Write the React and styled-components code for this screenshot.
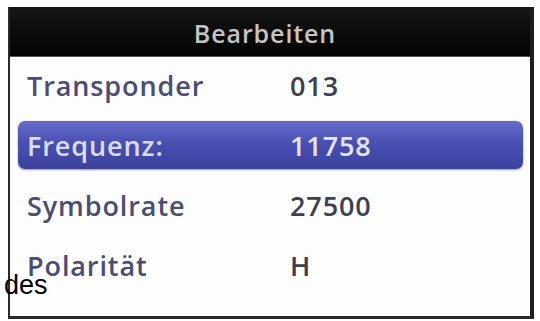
import React from "react";
import styled, { createGlobalStyle } from "styled-components";

const GlobalStyle = createGlobalStyle`
  html, body {
    margin: 0;
    padding: 0;
    background: #ffffff;
  }
`;

const Page = styled.div`
  position: relative;
  width: 540px;
  height: 321px;
  padding: 7px 6px 2px 8px;
  box-sizing: border-box;
  font-family: "Open Sans", "DejaVu Sans", sans-serif;
`;

const Dialog = styled.div`
  height: 100%;
  display: flex;
  flex-direction: column;
  border-left: 2px solid #2a2a2a;
  border-right: 4px solid #1e1e1e;
  border-bottom: 3px solid #2a2a2a;
  background: #fdfdfd;
  box-sizing: border-box;
`;

const Header = styled.div`
  height: 50px;
  flex-shrink: 0;
  display: flex;
  align-items: center;
  justify-content: center;
  padding: 2px 10px 0 0;
  box-sizing: border-box;
  background: linear-gradient(#151515, #030303);
  border-bottom: 1px solid #555;
  color: #c4c4c4;
  font-size: 25px;
  font-weight: 600;
  letter-spacing: 0.9px;
`;

const List = styled.div`
  display: flex;
  flex-direction: column;
  gap: 12px;
  padding: 4px 7px 0 8px;
`;

const Row = styled.div`
  height: 48px;
  display: flex;
  align-items: center;
  padding-left: 9px;
  border-radius: 7px;
  font-size: 27px;
  font-weight: 600;
  letter-spacing: 0.9px;
  color: ${(p) => (p.active ? "#d9dcf4" : "#4a4d74")};
  background: ${(p) =>
    p.active
      ? "linear-gradient(#666cc8 0%, #4a50b2 45%, #3b419e 100%)"
      : "transparent"};
  box-shadow: ${(p) => (p.active ? "0 1px 2px rgba(40,40,90,0.5)" : "none")};
`;

const Label = styled.span`
  width: 263px;
  flex-shrink: 0;
`;

const Value = styled.span`
  color: ${(p) => (p.active ? "#e3e5f7" : "#3d3f54")};
`;

const Overlay = styled.span`
  position: absolute;
  left: 4px;
  top: 270px;
  font-family: "Liberation Sans", Arial, sans-serif;
  font-size: 27px;
  line-height: normal;
  color: #000;
`;

const rows = [
  { label: "Transponder", value: "013" },
  { label: "Frequenz:", value: "11758", active: true },
  { label: "Symbolrate", value: "27500" },
  { label: "Polarität", value: "H" },
];

const App = () => {
  return (
    <Page>
      <GlobalStyle />
      <Dialog>
        <Header>Bearbeiten</Header>
        <List>
          {rows.map((r) => (
            <Row key={r.label} active={r.active}>
              <Label>{r.label}</Label>
              <Value active={r.active}>{r.value}</Value>
            </Row>
          ))}
        </List>
      </Dialog>
      <Overlay>des</Overlay>
    </Page>
  );
};

export default App;
